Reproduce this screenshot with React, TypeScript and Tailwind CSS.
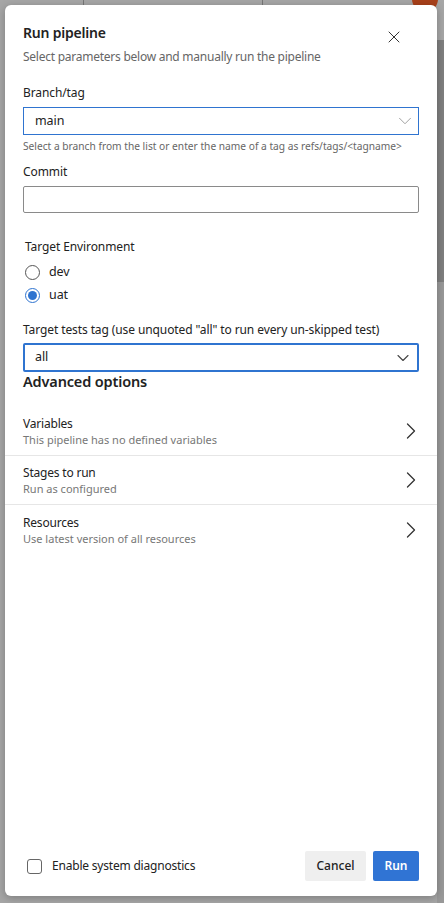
import { ChevronDown, ChevronRight, X } from 'lucide-react';

const advanced = [
  { title: 'Variables', sub: 'This pipeline has no defined variables' },
  { title: 'Stages to run', sub: 'Run as configured' },
  { title: 'Resources', sub: 'Use latest version of all resources' },
];

function Radio({ label, checked }: { label: string; checked?: boolean }) {
  return (
    <div className="flex h-[23px] items-center gap-[9px] pl-[2px]">
      <span
        className={`flex h-[15px] w-[15px] items-center justify-center rounded-full border ${
          checked ? 'border-[#2f74d0]' : 'border-[#555]'
        }`}
      >
        {checked && <span className="h-[9px] w-[9px] rounded-full bg-[#2f74d0]" />}
      </span>
      <span className="text-[12.5px] tracking-[-0.1px] text-[#222]">{label}</span>
    </div>
  );
}

export default function App() {
  return (
    <div
      className="relative h-[903px] w-[444px] overflow-hidden bg-[#a6a6a6]"
      style={{ fontFamily: '"Noto Sans", "Open Sans", sans-serif' }}
    >
      {/* dimmed page behind the dialog */}
      <div className="absolute left-[83px] top-0 h-[5px] w-px bg-[#777]" />
      <div className="absolute left-[262px] top-0 h-[5px] w-px bg-[#777]" />
      <div className="absolute right-[6px] top-[-14px] h-[26px] w-[26px] rounded-full bg-[#a8401a]" />
      <div className="absolute right-0 top-[40px] h-[242px] w-[7px] bg-[#7f7f7f]" />
      <div className="absolute right-0 top-[282px] h-[621px] w-[7px] bg-[#999]" />

      {/* Dialog */}
      <div className="absolute left-[5px] top-[5px] flex h-[891px] w-[432px] flex-col rounded-[6px] bg-white shadow-[0_2px_8px_rgba(0,0,0,0.25)]">
        <div className="px-[18px]">
          {/* Header */}
          <div className="flex items-start justify-between pt-[18px]">
            <div>
              <h1 className="text-[14px] font-semibold leading-[20px] tracking-[-0.2px] text-[#222]">
                Run pipeline
              </h1>
              <p className="mt-[5px] text-[12px] leading-[18px] tracking-[-0.25px] text-[#666]">
                Select parameters below and manually run the pipeline
              </p>
            </div>
            <X className="mr-[15px] mt-[4px] h-[20px] w-[20px] text-[#333]" strokeWidth={1.2} />
          </div>

          {/* Branch/tag */}
          <label className="mt-[18px] block text-[12px] leading-[18px] tracking-[-0.1px] text-[#222]">
            Branch/tag
          </label>
          <div className="mt-[5px] flex h-[28px] items-center justify-between border border-[#2f74d0] pl-[11px] pr-[2px]">
            <span className="text-[12.5px] tracking-[-0.1px] text-[#222]">main</span>
            <ChevronDown className="h-[22px] w-[22px] text-[#999]" strokeWidth={1} />
          </div>
          <p className="mt-[4px] text-[10.2px] leading-[14px] text-[#666]">
            Select a branch from the list or enter the name of a tag as refs/tags/&lt;tagname&gt;
          </p>

          {/* Commit */}
          <label className="mt-[10px] block text-[12px] leading-[18px] tracking-[-0.1px] text-[#222]">
            Commit
          </label>
          <div className="mt-[5px] h-[27px] rounded-[2px] border border-[#8a8a8a]" />

          {/* Target Environment */}
          <div className="mt-[25px] pl-[2px] text-[12px] leading-[18px] tracking-[-0.1px] text-[#222]">
            Target Environment
          </div>
          <div className="mt-[5px]">
            <Radio label="dev" />
            <Radio label="uat" checked />
          </div>

          {/* Target tests tag */}
          <label className="mt-[14px] block text-[12px] leading-[18px] tracking-[-0.1px] text-[#222]">
            Target tests tag (use unquoted "all" to run every un-skipped test)
          </label>
          <div className="mt-[4px] flex h-[29px] items-center justify-between rounded-[2px] border-2 border-[#2f74d0] pl-[10px] pr-[4px]">
            <span className="text-[12.5px] tracking-[-0.1px] text-[#222]">all</span>
            <ChevronDown className="h-[20px] w-[20px] text-[#444]" strokeWidth={1.3} />
          </div>

          {/* Advanced options */}
          <h2 className="mt-[-1px] text-[14.5px] font-semibold leading-[20px] tracking-[-0.15px] text-[#222]">
            Advanced options
          </h2>
        </div>

        <div className="mt-[16px]">
          {advanced.map((row, i) => (
            <div
              key={row.title}
              className={`flex h-[49px] items-center justify-between pl-[18px] pr-[12px] ${
                i < advanced.length - 1 ? 'border-b border-[#e6e6e6]' : ''
              }`}
            >
              <div>
                <div className="text-[12px] leading-[17px] tracking-[-0.2px] text-[#222]">{row.title}</div>
                <div className="text-[11px] leading-[15px] text-[#777]">{row.sub}</div>
              </div>
              <ChevronRight className="h-[28px] w-[28px] text-[#333]" strokeWidth={1.1} />
            </div>
          ))}
        </div>

        <div className="flex-1" />

        {/* Footer */}
        <div className="flex items-center justify-between pb-[15px] pl-[22px] pr-[18px]">
          <div className="flex items-center gap-[10px]">
            <span className="h-[15px] w-[15px] rounded-[3px] border border-[#666]" />
            <span className="text-[12px] tracking-[-0.2px] text-[#222]">Enable system diagnostics</span>
          </div>
          <div className="flex gap-[7px]">
            <button className="h-[30px] w-[61px] rounded-[2px] bg-[#efefef] text-[12px] font-medium text-[#222]">
              Cancel
            </button>
            <button className="h-[30px] w-[46px] rounded-[2px] bg-[#3074d4] text-[12px] font-semibold text-white">
              Run
            </button>
          </div>
        </div>
      </div>
    </div>
  );
}
